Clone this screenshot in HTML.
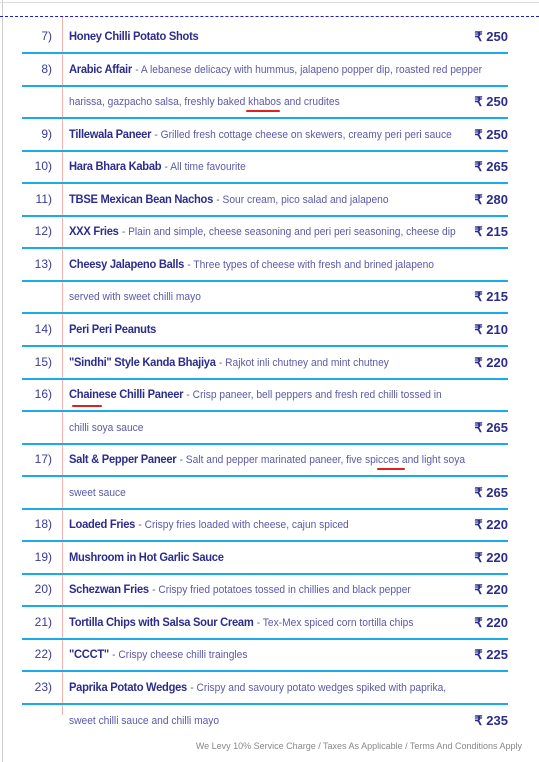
<!DOCTYPE html>
<html><head><meta charset="utf-8"><style>
body{margin:0;width:539px;height:762px;background:#fff;position:relative;overflow:hidden;font-family:"Liberation Sans",sans-serif;}
.b{position:absolute;}
.ln{position:absolute;left:22px;width:486px;height:2px;background:#1aace8;}
.n{position:absolute;right:487px;font-size:12px;color:#3a3a9a;white-space:nowrap;}
.t{position:absolute;left:69px;font-size:12.5px;color:#2c2c8c;white-space:nowrap;transform:scaleX(0.93);transform-origin:0 0;}
.t b{font-weight:bold;font-size:12px;letter-spacing:-0.3px;}
.t span{font-size:11px;color:#5a5aa8;}
.p{position:absolute;right:31px;font-size:13px;font-weight:bold;color:#2c2c8c;white-space:nowrap;}
.u{position:absolute;height:2px;background:#e02020;border-radius:1px;}
</style></head><body>
<div class="b" style="left:2px;top:0;width:1px;height:762px;background:#ccc"></div>
<div class="b" style="left:0;top:2px;width:539px;height:1px;background:#ddd"></div>
<div class="b" style="left:0;top:16px;width:539px;border-top:1.5px dashed #1a1ad0"></div>
<div class="b" style="left:62px;top:17px;width:1px;height:698px;background:#f5b0b0"></div>
<div id="c"></div>
<div class="u" style="left:246px;top:110px;width:34px"></div>
<div class="u" style="left:72px;top:405px;width:30px"></div>
<div class="u" style="left:377px;top:468px;width:28px"></div>
<div class="b" style="right:17px;top:741px;font-family:'Liberation Sans',sans-serif;font-size:9px;color:#888">We Levy 10% Service Charge / Taxes As Applicable / Terms And Conditions Apply</div>
<script>
var rows=[
["7)","<b>Honey Chilli Potato Shots</b>","₹ 250"],
["8)","<b>Arabic Affair</b> <span>- A lebanese delicacy with hummus, jalapeno popper dip, roasted red pepper</span>",""],
["","<span>harissa, gazpacho salsa, freshly baked khabos and crudites</span>","₹ 250"],
["9)","<b>Tillewala Paneer</b> <span>- Grilled fresh cottage cheese on skewers, creamy peri peri sauce</span>","₹ 250"],
["10)","<b>Hara Bhara Kabab</b> <span>- All time favourite</span>","₹ 265"],
["11)","<b>TBSE Mexican Bean Nachos</b> <span>- Sour cream, pico salad and jalapeno</span>","₹ 280"],
["12)","<b>XXX Fries</b> <span>- Plain and simple, cheese seasoning and peri peri seasoning, cheese dip</span>","₹ 215"],
["13)","<b>Cheesy Jalapeno Balls</b> <span>- Three types of cheese with fresh and brined jalapeno</span>",""],
["","<span>served with sweet chilli mayo</span>","₹ 215"],
["14)","<b>Peri Peri Peanuts</b>","₹ 210"],
["15)","<b>\"Sindhi\" Style Kanda Bhajiya</b> <span>- Rajkot inli chutney and mint chutney</span>","₹ 220"],
["16)","<b>Chainese Chilli Paneer</b> <span>- Crisp paneer, bell peppers and fresh red chilli tossed in</span>",""],
["","<span>chilli soya sauce</span>","₹ 265"],
["17)","<b>Salt &amp; Pepper Paneer</b> <span>- Salt and pepper marinated paneer, five spicces and light soya</span>",""],
["","<span>sweet sauce</span>","₹ 265"],
["18)","<b>Loaded Fries</b> <span>- Crispy fries loaded with cheese, cajun spiced</span>","₹ 220"],
["19)","<b>Mushroom in Hot Garlic Sauce</b>","₹ 220"],
["20)","<b>Schezwan Fries</b> <span>- Crispy fried potatoes tossed in chillies and black pepper</span>","₹ 220"],
["21)","<b>Tortilla Chips with Salsa Sour Cream</b> <span>- Tex-Mex spiced corn tortilla chips</span>","₹ 220"],
["22)","<b>\"CCCT\"</b> <span>- Crispy cheese chilli traingles</span>","₹ 225"],
["23)","<b>Paprika Potato Wedges</b> <span>- Crispy and savoury potato wedges spiked with paprika,</span>",""],
["","<span>sweet chilli sauce and chilli mayo</span>","₹ 235"]];
var h="";
for(var i=0;i<rows.length;i++){var y=29+i*32.55;var r=rows[i];
h+='<div class="n" style="top:'+y+'px">'+r[0]+'</div><div class="t" style="top:'+y+'px">'+r[1]+'</div><div class="p" style="top:'+y+'px">'+r[2]+'</div>';
if(i<rows.length-1)h+='<div class="ln" style="top:'+(y+23)+'px"></div>';}
document.getElementById('c').innerHTML=h;
</script>
</body></html>
